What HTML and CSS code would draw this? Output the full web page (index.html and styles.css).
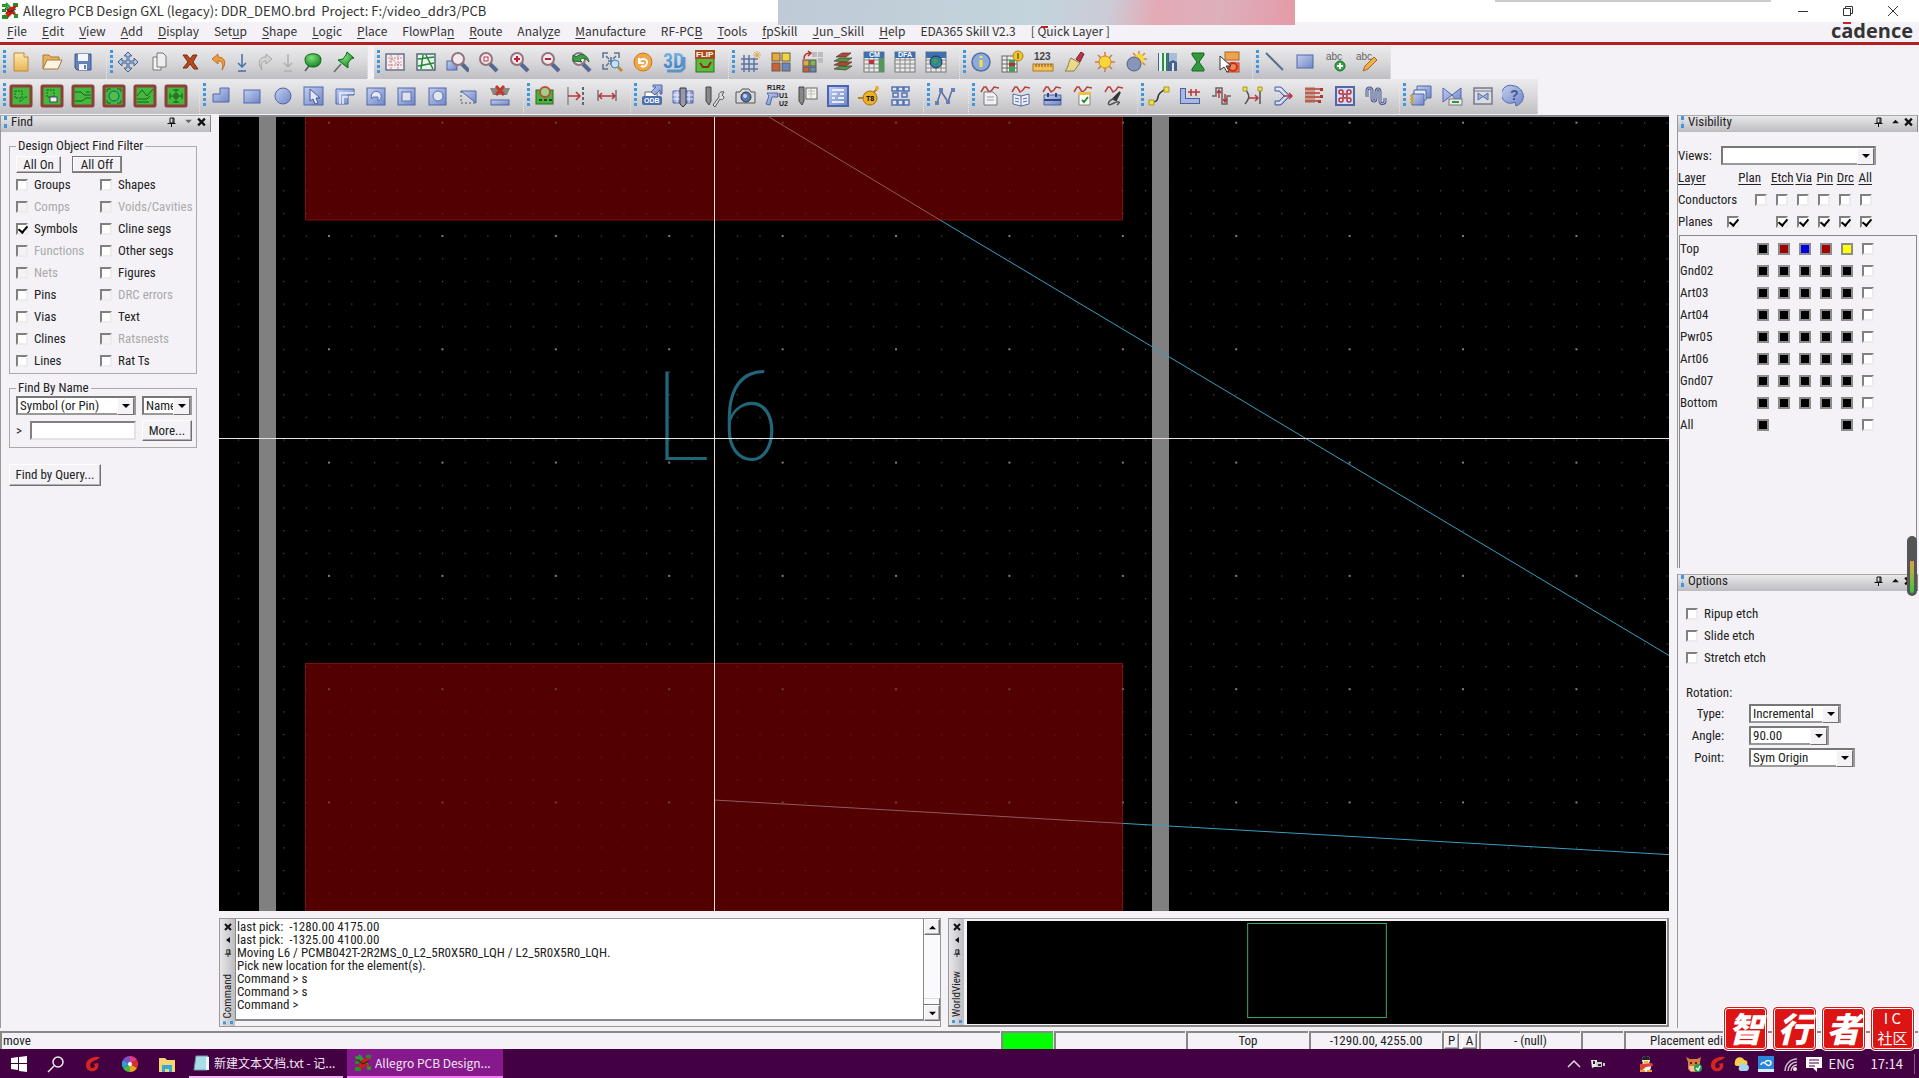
FILE: index.html
```html
<!DOCTYPE html>
<html lang="en">
<head>
<meta charset="utf-8">
<title>Allegro PCB Design GXL (legacy): DDR_DEMO.brd</title>
<link rel="stylesheet" href="styles.css">
</head>
<body>
<svg class="defs" aria-hidden="true">
  <defs>
    <linearGradient id="gb" x1="0" y1="0" x2="1" y2="1"><stop offset="0" stop-color="#c4cff0"/><stop offset="1" stop-color="#6f86c8"/></linearGradient>
    <linearGradient id="gl" x1="0" y1="0" x2="0" y2="1"><stop offset="0" stop-color="#7ec0ef"/><stop offset="1" stop-color="#2f72b8"/></linearGradient>
    <linearGradient id="gy" x1="0" y1="0" x2="0" y2="1"><stop offset="0" stop-color="#ffe9b0"/><stop offset="1" stop-color="#e9b552"/></linearGradient>
    <radialGradient id="gg" cx=".4" cy=".3" r=".8"><stop offset="0" stop-color="#7fe07a"/><stop offset="1" stop-color="#0b7a1c"/></radialGradient>
    <symbol id="allegro" viewBox="0 0 18 18"><path d="M1 2h5v3H1zM1 7h4v3H1zM12 1h5v4h-5zM13 12h4v4h-4zM1 13h6v4H1z" fill="#1f8f2a"/><path d="M2 4c5-2 5 6 8 6s4 4 6 5M5 1l9 10" fill="none" stroke="#2f9f33" stroke-width="2"/><path d="M1 14C6 13 5 6 10 5l7-2-5 6 4 4-5-1-4 4-2-4z" fill="#c5201a"/><path d="M4 6l5 4 6-3" fill="none" stroke="#222" stroke-width="1"/></symbol>
    <symbol id="pin" viewBox="0 0 8 10"><path d="M2.500 1h4v5h-4zM0 6.500h8M4 6.500V10M5.500 1v5" fill="none" stroke="#111"/></symbol>
    <symbol id="swirl" viewBox="0 0 18 18"><path d="M15 2C8 1 2 5 2 10s4 7 8 6 5-5 4-8l-5 1c2 0 3 3 0 4s-4-4-1-6 6-2 8-5z" fill="#d6251e"/></symbol>
    <symbol id="wave" viewBox="0 0 24 24"><path d="M3 8l3-5 2 0 3 5 3-2 2-3 5 1" fill="none" stroke="#b5423f" stroke-width="1.500"/></symbol>
    <symbol id="board" viewBox="0 0 24 24"><rect x="2" y="2" width="20" height="20" rx="1" fill="#43b93d" stroke="#8c4038" stroke-width="3"/></symbol>
    <symbol id="lens" viewBox="0 0 24 24"><path d="M14 14l7 7" stroke="#54698f" stroke-width="4"/><circle cx="10" cy="9" r="6" fill="#f2e9ef" stroke="#95737c" stroke-width="2"/></symbol>
    <symbol id="sheet" viewBox="0 0 24 24"><rect x="2" y="2" width="20" height="20" fill="#e9e9e9" stroke="#777"/><path d="M2 10h20M2 14h20M2 18h20M7 8v14M12 8v14M17 8v14" stroke="#888"/><rect x="2" y="2" width="20" height="6" fill="#3f6fae"/></symbol>
    <symbol id="downarrow" viewBox="0 0 24 24"><path d="M12 4v13M8 13l4 4 4-4M8 21h8" fill="none" stroke="currentColor" stroke-width="1.500"/></symbol>
  </defs>
</svg>

<header class="titlebar">
  <svg class="app-icon" aria-hidden="true"><use href="#allegro"/></svg>
  <h1>Allegro PCB Design GXL (legacy): DDR_DEMO.brd&nbsp; Project: F:/video_ddr3/PCB</h1>
  <div class="window-buttons">
    <button aria-label="Minimize"><svg viewBox="0 0 12 12"><path d="M1 6.500h10"/></svg></button>
    <button aria-label="Restore"><svg viewBox="0 0 12 12"><path d="M1.500 3.500h7v7h-7zM3.500 3.500v-2h7v7h-2"/></svg></button>
    <button aria-label="Close"><svg viewBox="0 0 12 12"><path d="M1 1l10 10M11 1L1 11"/></svg></button>
  </div>
  <div class="screen-blur"></div>
  <div class="record-mark"></div>
  <div class="top-shade"></div>
</header>

<nav class="menubar">
  <button><u>F</u>ile</button><button><u>E</u>dit</button><button><u>V</u>iew</button><button><u>A</u>dd</button><button><u>D</u>isplay</button><button>Set<u>u</u>p</button><button><u>S</u>hape</button><button><u>L</u>ogic</button><button><u>P</u>lace</button><button>FlowPla<u>n</u></button><button><u>R</u>oute</button><button>Analy<u>z</u>e</button><button><u>M</u>anufacture</button><button>RF-PC<u>B</u></button><button><u>T</u>ools</button><button><u>f</u>pSkill</button><button><u>J</u>un_Skill</button><button><u>H</u>elp</button><button>EDA365 Skill V2.3</button><button>[ Quick Layer ]</button>
  <span class="brand">c<span class="brand-a">a</span>dence</span>
</nav>

<div class="toolbars">
<div class="toolrow">
  <div class="tools">
    <button aria-label="New"><svg viewBox="0 0 24 24"><path d="M5 3h10l4 4v14H5z" fill="url(#gy)" stroke="#b98a3c"/><path d="M15 3v4h4" fill="#fff3cf" stroke="#b98a3c"/></svg></button>
    <button aria-label="Open"><svg viewBox="0 0 24 24"><path d="M3 19V5h6l2 2h8v4" fill="#e8b35c" stroke="#a9793a"/><path d="M3 19l4-9h15l-4 9z" fill="#fdf3e2" stroke="#a9793a"/></svg></button>
    <button aria-label="Save"><svg viewBox="0 0 24 24"><path d="M4 4h16v16H6l-2-2z" fill="#6680b8" stroke="#3d568f"/><path d="M7 4h10v7H7zM8 14h8v6H8z" fill="#f3f5fa"/><path d="M13 15h2v4h-2z" fill="#6680b8"/></svg></button>
  </div>
  <div class="tools">
    <button aria-label="Move"><svg viewBox="0 0 24 24"><path d="M12 2l4 4h-3v5h5V8l4 4-4 4v-3h-5v5h3l-4 4-4-4h3v-5H6v3l-4-4 4-4v3h5V6H8z" fill="#b8c9e6" stroke="#3f5f8a"/></svg></button>
    <button aria-label="Copy"><svg viewBox="0 0 24 24"><path d="M6 7h8v13H6z" fill="#f4f4f4" stroke="#777"/><path d="M10 3h6l3 3v11h-9z" fill="#eee" stroke="#777"/></svg></button>
    <button aria-label="Delete"><svg viewBox="0 0 24 24"><path d="M5 5l5 7-5 6h4l3-4 4 5h4l-5-7 4-7h-4l-3 4-3-4z" fill="#b44a1e" stroke="#7a2c10"/></svg></button>
    <button class="wide" aria-label="Undo"><svg viewBox="0 0 24 24"><path d="M5 9l6-5v3c7 0 9 6 4 13 2-6 0-9-4-9v3z" fill="#eb9b3c" stroke="#c0722a"/></svg></button>
    <button class="slim blue" aria-label="Undo list"><svg viewBox="0 0 24 24"><use href="#downarrow"/></svg></button>
    <button class="wide" aria-label="Redo"><svg viewBox="0 0 24 24"><path d="M19 9l-6-5v3c-7 0-9 6-4 13-2-6 0-9 4-9v3z" fill="#d2d2d2" stroke="#a6a6a6"/></svg></button>
    <button class="slim pale" aria-label="Redo list"><svg viewBox="0 0 24 24"><use href="#downarrow"/></svg></button>
    <button aria-label="Pin ball"><svg viewBox="0 0 24 24"><path d="M8 16l-4 5" stroke="#555" stroke-width="1.500"/><path d="M4 9c0-7 16-7 16 0s-5 8-8 8-8-1-8-8z" fill="url(#gg)" stroke="#0b6a18"/></svg></button>
    <button aria-label="Pushpin"><svg viewBox="0 0 24 24"><path d="M9 14l-7 8" stroke="#666" stroke-width="1.500"/><path d="M15 2l7 6-3 1-3 4 0 5-10-8 5-1 3-4z" fill="url(#gg)" stroke="#0c6c1a"/></svg></button>
  </div>
  <div class="tools after-gap">
    <button aria-label="Unrats all"><svg viewBox="0 0 24 24"><rect x="3" y="4" width="18" height="16" fill="#f3eef2" stroke="#6a7288" stroke-width="1.500"/><path d="M5 8h14M5 15h14M8 5v14M15 5v14M6 12l4-3 4 6 5-4" fill="none" stroke="#cf7f86" stroke-dasharray="2 1"/></svg></button>
    <button aria-label="Rats all"><svg viewBox="0 0 24 24"><rect x="3" y="4" width="18" height="16" fill="#e9f3ea" stroke="#53697a" stroke-width="1.500"/><path d="M4 9l16-2M4 16l16-3M9 5l-2 14M12 5l7 14" fill="none" stroke="#25863a" stroke-width="1.500"/></svg></button>
    <button aria-label="Zoom by points"><svg viewBox="0 0 24 24"><rect x="2" y="11" width="10" height="9" class="b"/><use href="#lens" x="3" y="0"/></svg></button>
    <button aria-label="Zoom fit"><svg viewBox="0 0 24 24"><use href="#lens"/><rect x="8" y="7" width="4" height="4" fill="#fff" stroke="#c22f46"/></svg></button>
    <button aria-label="Zoom in"><svg viewBox="0 0 24 24"><use href="#lens"/><path d="M7 9h6M10 6v6" stroke="#c02030" stroke-width="2"/></svg></button>
    <button aria-label="Zoom out"><svg viewBox="0 0 24 24"><use href="#lens"/><path d="M7 9h6" stroke="#c02030" stroke-width="2"/></svg></button>
    <button aria-label="Zoom previous"><svg viewBox="0 0 24 24"><use href="#lens"/><path d="M4 11V5l3 2c5-5 12-2 13 5-4-5-7-4-9-2l2 2z" fill="#3fa04b" stroke="#1c6a2c"/></svg></button>
    <button aria-label="Zoom selection"><svg viewBox="0 0 24 24"><path d="M3 8V3h5M14 3h5v5M3 14v5h5M8 11h7M11 7v8M6 6l3 3M16 6l-3 3M6 16l3-3" fill="none" stroke="#5d7391" stroke-width="1.500"/><circle cx="15" cy="14" r="4" fill="#bfe0fa" stroke="#4d7fae"/><path d="M18 17l4 4" stroke="#c08a3c" stroke-width="3"/></svg></button>
    <button aria-label="Redraw"><svg viewBox="0 0 24 24"><circle cx="12" cy="12" r="9" fill="#f0a74a" stroke="#c9761f"/><path d="M8 8v5h5M8 12c2-5 9-3 8 1s-4 4-6 3" fill="none" stroke="#fff" stroke-width="2"/></svg></button>
    <button aria-label="3D view"><svg viewBox="0 0 24 24"><path d="M5 21h14l3-3V7" fill="none" stroke="#5f93c6" stroke-width="3"/><text x="1" y="18" class="t3d">3D</text></svg></button>
    <button aria-label="Flip design"><svg viewBox="0 0 24 24"><rect x="3" y="8" width="18" height="14" fill="#5cba3c" stroke="#2d6f1d"/><path d="M7 13l3 4h5l3-5" fill="none" stroke="#8c2c18" stroke-width="2"/><rect x="2" y="0" width="20" height="9" fill="#a84a1c"/><text x="3" y="7" class="t8 w">FLIP</text></svg></button>
  </div>
  <div class="tools">
    <button aria-label="Grid toggle"><svg viewBox="0 0 24 24"><path d="M3 9h17M3 14h17M3 19h17M6 5v17M11 5v17M16 8v14" stroke="#5b76a6" stroke-width="1.500"/><path d="M19 1v8M15 5h8M16 2l6 6M22 2l-6 6" stroke="#e2a653"/></svg></button>
    <button aria-label="Color"><svg viewBox="0 0 24 24"><g stroke="#6a5a44"><rect x="3" y="3" width="8" height="8" fill="#e8a93a"/><rect x="13" y="3" width="8" height="8" fill="#f2d63f"/><rect x="3" y="13" width="8" height="8" fill="#c9623a"/><rect x="13" y="13" width="8" height="8" fill="#6787be"/></g></svg></button>
    <button aria-label="Shadow"><svg viewBox="0 0 24 24"><path d="M12 2h5v5h-5zM18 2h5v5h-5zM18 8h5v5h-5z" fill="#bbb"/><path d="M4 9c0-4 2-6 6-6M8 1l3 2-3 3" fill="none" stroke="#b5302e" stroke-width="1.500"/><g stroke="#555"><rect x="3" y="10" width="6" height="6" fill="#e8a93a"/><rect x="10" y="10" width="6" height="6" fill="#7db454"/><rect x="3" y="17" width="6" height="5" fill="#c9623a"/><rect x="10" y="17" width="6" height="5" fill="#6787be"/></g></svg></button>
    <button aria-label="Cross section"><svg viewBox="0 0 24 24"><g stroke="#543" stroke-width=".8"><path d="M3 19l6-3h12l-6 4z" fill="#4a9a48"/><path d="M3 15l6-3h12l-6 4z" fill="#b54434"/><path d="M3 11l6-3h12l-6 4z" fill="#4a9a48"/><path d="M5 7l6-4h9l-5 4z" fill="#b54434"/></g></svg></button>
    <button aria-label="Constraint manager"><svg viewBox="0 0 24 24"><use href="#sheet"/><path d="M7 10h5v4H7z" fill="#b33"/><path d="M17 8h5v14h-5z" fill="#4f9a58"/><text x="7" y="7" class="t7 w">CM</text></svg></button>
    <button aria-label="DFA table"><svg viewBox="0 0 24 24"><use href="#sheet"/><text x="5" y="7" class="t7 w">DFA</text></svg></button>
    <button aria-label="Global table"><svg viewBox="0 0 24 24"><use href="#sheet"/><circle cx="12" cy="12" r="6" fill="#2f7fa6" stroke="#234"/><path d="M8 9l4-1 2 3-4 4zM14 13l3 0-2 4z" fill="#3da158"/></svg></button>
  </div>
  <div class="tools">
    <button aria-label="Show element"><svg viewBox="0 0 24 24"><circle cx="12" cy="12" r="9" fill="#8fabda" stroke="#5570a8" stroke-width="1.500"/><path d="M12 10v7M12 6v2" stroke="#f8e14a" stroke-width="3"/></svg></button>
    <button aria-label="Show information"><svg viewBox="0 0 24 24"><rect x="2" y="6" width="15" height="16" fill="#ececec" stroke="#666"/><path d="M2 10h15M2 14h15M2 18h15M7 6v16" stroke="#666"/><path d="M9 10h6v12H9z" fill="#4f9a58"/><path d="M9 13h6v3H9z" fill="#a33"/><circle cx="18" cy="6" r="5" fill="#f1c524" stroke="#a8851c"/><path d="M18 3v6" stroke="#333"/></svg></button>
    <button aria-label="Measure"><svg viewBox="0 0 24 24"><text x="3" y="10" class="t10">123</text><rect x="2" y="14" width="20" height="7" fill="#f4c25b" stroke="#b07b22"/><path d="M5 14v3M8 14v3M11 14v3M14 14v3M17 14v3M20 14v3" stroke="#7c5516"/></svg></button>
    <button aria-label="Highlight"><svg viewBox="0 0 24 24"><path d="M14 9l5-7 3 2-4 8z" fill="#b5364a" stroke="#7c2232"/><path d="M9 8l9 5-6 8H3c4-4 3-9 6-13z" fill="#ead98c" stroke="#8c7a44"/></svg></button>
    <button aria-label="Brighten"><svg viewBox="0 0 24 24"><path d="M12 2v20M2 12h20M5 5l14 14M19 5L5 19" stroke="#cf7f3a" stroke-width="1.500"/><circle cx="12" cy="12" r="6" fill="#fbd63a" stroke="#c98e1c"/></svg></button>
    <button aria-label="Dim"><svg viewBox="0 0 24 24"><path d="M15 1v16M7 9h16M9 3l12 12M21 3L9 15" stroke="#cf8f3a" stroke-width="1.500"/><circle cx="15" cy="9" r="5" fill="#fbd63a"/><circle cx="10" cy="14" r="7" fill="#8795b8" stroke="#4f5f88"/></svg></button>
    <button aria-label="Waive DRC"><svg viewBox="0 0 24 24"><path d="M3 3h19v18H3z" fill="#44648c"/><path d="M4 3h3v18H4zM9 3h2v18H9z" fill="#e8f3e8"/><path d="M7 3h2v18H7zM12 3h1v18h-1z" fill="#2f8f53"/><path d="M14 3h8v9l-4-2-4 2z" fill="#a9bfd8"/><path d="M17 13h2v8h-2z" fill="#dfe8f2"/></svg></button>
    <button aria-label="Run task"><svg viewBox="0 0 24 24"><path d="M6 3h12v2l-5 7 5 7v2H6v-2l5-7-5-7z" fill="#2f9a3c" stroke="#14641f"/></svg></button>
    <button aria-label="Deselect"><svg viewBox="0 0 24 24"><rect x="8" y="2" width="14" height="8" fill="#eea24e" stroke="#a8682a"/><rect x="10" y="13" width="12" height="9" fill="#e88b4e" stroke="#b3442a"/><circle cx="16" cy="17" r="4" fill="none" stroke="#d8281e" stroke-width="2"/><path d="M3 6v14l4-3 3 5 2-1-3-5h5z" fill="#fff" stroke="#333"/></svg></button>
  </div>
  <div class="tools">
    <button aria-label="Add line"><svg viewBox="0 0 24 24"><path d="M4 3l17 17" stroke="#5d6c90" stroke-width="2"/></svg></button>
    <button aria-label="Add rectangle"><svg viewBox="0 0 24 24"><rect x="4" y="5" width="16" height="13" class="b"/></svg></button>
    <button aria-label="Add text"><svg viewBox="0 0 24 24"><text x="2" y="10" class="abc">abc</text><circle cx="16" cy="16" r="5" fill="#35a344" stroke="#187026"/><path d="M16 13v6M13 16h6" stroke="#fff" stroke-width="2"/></svg></button>
    <button aria-label="Edit text"><svg viewBox="0 0 24 24"><text x="1" y="10" class="abc">abc</text><path d="M8 21l2-5 9-9 3 3-9 9z" fill="#eeb146" stroke="#a8652a"/></svg></button>
  </div>
</div>

<div class="toolrow">
  <div class="tools">
    <button aria-label="General edit"><svg viewBox="0 0 24 24"><use href="#board"/><path d="M6 7h7v7H6z" class="gd"/><path d="M10 17c5 0 3-4 8-4" class="gk"/></svg></button>
    <button aria-label="Placement edit"><svg viewBox="0 0 24 24"><use href="#board"/><path d="M7 6h7v7H7z" class="gd"/><rect x="10" y="13" width="7" height="5" fill="#eef" stroke="#445"/></svg></button>
    <button aria-label="Etch edit"><svg viewBox="0 0 24 24"><use href="#board"/><path d="M4 8h6l3 3h7M4 17h7l4-3h5M15 8h4" class="gk"/></svg></button>
    <button aria-label="Shape edit"><svg viewBox="0 0 24 24"><use href="#board"/><circle cx="12" cy="12" r="5" fill="#4cc144" stroke="#16569a"/><path d="M5 8V5h4M15 5h4v3M5 16v3h4M19 16v3h-4" class="gk"/></svg></button>
    <button aria-label="Signal edit"><svg viewBox="0 0 24 24"><use href="#board"/><path d="M4 12l5-6 5 6 6-7M4 15h10l3-3M4 18h12" class="gk"/></svg></button>
    <button aria-label="RF edit"><svg viewBox="0 0 24 24"><use href="#board"/><path d="M12 5v14M5 12h14M9 6h6M9 18h6M6 9v6M18 9v6M10 10h4v4h-4z" class="gk"/></svg></button>
  </div>
  <div class="tools">
    <button aria-label="Add polygon"><svg viewBox="0 0 24 24"><path d="M11 4h9v14H4v-8h7z" class="b"/></svg></button>
    <button aria-label="Add shape rectangle"><svg viewBox="0 0 24 24"><rect x="4" y="6" width="16" height="13" class="b"/></svg></button>
    <button aria-label="Add circle"><svg viewBox="0 0 24 24"><circle cx="12" cy="12" r="8" class="b"/></svg></button>
    <button aria-label="Select shape"><svg viewBox="0 0 24 24"><rect x="2" y="3" width="19" height="18" class="b"/><path d="M8 5v12l3-2 2 5 3-1-2-5h4z" fill="#dfe6f8" stroke="#4a5c90"/></svg></button>
    <button aria-label="Manual void polygon"><svg viewBox="0 0 24 24"><path d="M3 5h18v6h-6v9H3z" class="b"/><path d="M7 20V9h14M10 20v-7h5" class="w1"/></svg></button>
    <button aria-label="Edit boundary"><svg viewBox="0 0 24 24"><rect x="3" y="4" width="18" height="17" class="b"/><path d="M8 15a5 5 0 1 1 6 2v-4H9z" fill="#e3e9f8" stroke="#5a70ae"/></svg></button>
    <button aria-label="Void rectangle"><svg viewBox="0 0 24 24"><rect x="3" y="4" width="17" height="17" class="b"/><rect x="7" y="8" width="9" height="9" fill="#dfe0ea" stroke="#5a70ae"/></svg></button>
    <button aria-label="Void circle"><svg viewBox="0 0 24 24"><rect x="3" y="4" width="17" height="17" class="b"/><circle cx="12" cy="12" r="5" fill="#e3e5ef" stroke="#5a70ae"/></svg></button>
    <button aria-label="Cut shape"><svg viewBox="0 0 24 24"><path d="M4 7h15v12z" class="b"/><path d="M4 7v12h15" fill="none" stroke="#555" stroke-dasharray="2 2"/></svg></button>
    <button aria-label="Delete islands"><svg viewBox="0 0 24 24"><path d="M2 4h20l-3 7H5z" fill="#888"/><path d="M8 2l8 9M16 2L8 11" stroke="#c2392a" stroke-width="3"/><rect x="3" y="16" width="18" height="5" class="b"/></svg></button>
  </div>
  <div class="tools">
    <button aria-label="Snap to pad"><svg viewBox="0 0 24 24"><rect x="3" y="6" width="17" height="14" fill="#4fae42" stroke="#2b6b22"/><path d="M6 16h3M11 16h3M16 16h3" stroke="#14501a" stroke-width="2"/><circle cx="12" cy="8" r="5" fill="#9fcf88" stroke="#bb5238" stroke-width="2"/></svg></button>
    <button aria-label="Spacing"><svg viewBox="0 0 24 24"><path d="M4 3v18" stroke="#666"/><path d="M19 3v18" stroke="#666" stroke-width="2" stroke-dasharray="3 2"/><path d="M4 12h11M12 8l4 4-4 4" class="r"/></svg></button>
    <button aria-label="Dimension"><svg viewBox="0 0 24 24"><path d="M3 6v11M21 6v11" stroke="#777" stroke-width="1.500"/><path d="M4 12h16M7 9l-3 3 3 3M17 9l3 3-3 3" class="r"/></svg></button>
  </div>
  <div class="tools">
    <button aria-label="ODB export"><svg viewBox="0 0 24 24"><path d="M5 8h12v5H5z" fill="#fff" stroke="#667"/><path d="M11 8l5-5h-3V1h9v9h-2V6l-5 5z" class="b"/><rect x="2" y="12" width="20" height="9" rx="2" fill="#4d6fae"/><text x="4" y="19" class="t7 w">ODB</text></svg></button>
    <button aria-label="Artwork"><svg viewBox="0 0 24 24"><path d="M2 7h20v12H2z" class="b"/><path d="M2 11h20M2 15h20M6 7v12M18 7v12" stroke="#eef"/><path d="M9 4h6v16l-3 3-3-3z" fill="#99a" stroke="#334"/></svg></button>
    <button aria-label="NC parameters"><svg viewBox="0 0 24 24"><path d="M4 3h5v14l-2 4-3-4z" fill="#888" stroke="#444"/><path d="M11 21l6-8c-1-4 2-6 5-5l-2 3 2 2c0 3-3 3-4 2l-5 8z" fill="#ddd" stroke="#555"/></svg></button>
    <button aria-label="Snapshot"><svg viewBox="0 0 24 24"><path d="M3 8h4l2-3h7l2 3h4v11H3z" fill="#d8d8dc" stroke="#555"/><circle cx="13" cy="13" r="5" fill="#5577b4" stroke="#333"/><circle cx="12" cy="12" r="2" fill="#c6d6f2"/></svg></button>
    <button aria-label="Rename reference"><svg viewBox="0 0 24 24"><text x="3" y="6" class="t6">R1R2</text><text x="15" y="14" class="t6">U1</text><text x="15" y="22" class="t6">U2</text><path d="M3 9h11v4H8l-2 8-4-1 3-8z" class="b"/></svg></button>
    <button aria-label="Drill legend"><svg viewBox="0 0 24 24"><path d="M4 3h5v14l-2 4-3-4z" fill="#888" stroke="#444"/><rect x="11" y="4" width="11" height="11" fill="#f3f3ee" stroke="#666"/><path d="M13 7h7M13 10h7M16 5v9" stroke="#bbb"/></svg></button>
    <button aria-label="Silkscreen"><svg viewBox="0 0 24 24"><rect x="2" y="2" width="20" height="20" class="b"/><path d="M6 6h12M6 10h5M14 10h4M6 14h3M12 14h6M6 18h12" stroke="#e6ecfa" stroke-width="2"/><rect x="2" y="2" width="20" height="20" fill="none" stroke="#4a66b0" stroke-width="2"/></svg></button>
    <button aria-label="Testprep"><svg viewBox="0 0 24 24"><path d="M1 14h6M15 10l5-5v-3" fill="none" stroke="#b88418" stroke-width="2"/><circle cx="13" cy="14" r="7" fill="#eab028" stroke="#a57212"/><circle cx="20" cy="4" r="2" fill="#eab028"/><text x="9" y="17" class="t7">T8</text></svg></button>
    <button aria-label="Bump array"><svg viewBox="0 0 24 24"><g fill="#dbe4f6" stroke="#5673ae" stroke-width="1.500"><path d="M4 3h5v4H4zM10 3h5v4h-5zM16 3h5v4h-5zM5 9h5v4H5zM14 9h5v4h-5zM4 16h5v5H4zM10 16h5v5h-5zM16 16h5v5h-5z"/></g></svg></button>
  </div>
  <div class="tools">
    <button aria-label="Net schedule"><svg viewBox="0 0 24 24"><path d="M4 19l4-12 7 11 4-12" fill="none" stroke="#5b6c9c" stroke-width="1.500"/><path d="M2 17h4v4H2zM6 4h4v4H6zM13 16h4v4h-4zM18 4h4v4h-4z" fill="#6b7fb5"/></svg></button>
  </div>
  <div class="tools">
    <button aria-label="Signal model"><svg viewBox="0 0 24 24"><use href="#wave"/><path d="M6 8h9l4 4v9H6z" fill="#f2f2f2" stroke="#777"/><path d="M9 13h7M9 16h7" stroke="#999"/></svg></button>
    <button aria-label="Signal library"><svg viewBox="0 0 24 24"><use href="#wave"/><path d="M4 10l8 2 8-2v10l-8 2-8-2z" fill="#eef2fb" stroke="#56699a"/><path d="M12 12v10M6 14l4 1M14 15l4-1M6 17l4 1M14 18l4-1" stroke="#56699a"/></svg></button>
    <button aria-label="Signal audit"><svg viewBox="0 0 24 24"><use href="#wave"/><path d="M4 11h17v10H4z" class="b"/><path d="M4 16h17M8 9v4M16 9v4" stroke="#2f4578" stroke-width="2"/></svg></button>
    <button aria-label="Signal setup"><svg viewBox="0 0 24 24"><use href="#wave"/><path d="M8 10h11v11H8z" fill="#fdfdf6" stroke="#888"/><path d="M7 8h13v3H7z" fill="#e7c447"/><path d="M11 16l2 2 4-5" fill="none" stroke="#238a30" stroke-width="2"/></svg></button>
    <button aria-label="Signal probe"><svg viewBox="0 0 24 24"><use href="#wave"/><path d="M18 8l-7 7 3 1z" fill="#333" stroke="#333" stroke-width="2"/><path d="M12 15c-6 1-8 8-2 5s10-3 5 1" fill="none" stroke="#555" stroke-width="1.500"/></svg></button>
  </div>
  <div class="tools">
    <button aria-label="Add connect"><svg viewBox="0 0 24 24"><path d="M5 18c8 0 4-5 8-9l5-4" fill="none" stroke="#333" stroke-width="1.500"/><path d="M2 16h5v5H2zM17 3h5v5h-5z" fill="#f1df4a" stroke="#a8982c"/></svg></button>
    <button aria-label="Slide"><svg viewBox="0 0 24 24"><path d="M5 4v13h17" fill="none" stroke="#4c62a0" stroke-width="6"/><path d="M5 5v12h16" fill="none" stroke="#a9b8e2" stroke-width="4"/><path d="M10 8h12M13 5v7M18 5v7" class="r"/></svg></button>
    <button aria-label="Delay tune"><svg viewBox="0 0 24 24"><path d="M3 12h4V4h6v16h5v-8h4" fill="none" stroke="#666" stroke-width="1.500"/><path d="M10 14V7M8 9l2-3 2 3M16 10v7M14 15l2 3 2-3" class="r"/></svg></button>
    <button aria-label="Custom smooth"><svg viewBox="0 0 24 24"><path d="M5 5c5 6 5 9 0 15M20 5v15" fill="none" stroke="#555" stroke-width="1.500"/><path d="M9 14h9M15 11l3 3-3 3" class="r"/><path d="M3 3h4v4H3zM18 3h4v4h-4z" fill="#f1df4a" stroke="#a8982c"/></svg></button>
    <button aria-label="Gloss"><svg viewBox="0 0 24 24"><path d="M4 3h6l9 9-9 9H4v-4h4l5-5-5-5H4z" class="b"/><path d="M5 5h4l7 7-7 7H5" class="w1"/><path d="M12 12h9M18 9l3 3-3 3" class="r"/></svg></button>
    <button aria-label="Fanout"><svg viewBox="0 0 24 24"><path d="M3 5h10M3 9h10M3 13h10M3 17h10" stroke="#b5614e" stroke-width="3"/><path d="M13 5h7M13 9h5M13 13h7M13 17h5" class="r"/><path d="M18 4h3v3h-3zM18 11h3v3h-3zM16 16h3v3h-3z" fill="#a93a2c"/></svg></button>
    <button aria-label="Via array"><svg viewBox="0 0 24 24"><rect x="3" y="3" width="18" height="18" fill="#d3dcf3" stroke="#5068a8" stroke-width="2"/><g fill="#f4e4ea" stroke="#b33440" stroke-width="1.500"><circle cx="8" cy="8" r="2"/><circle cx="16" cy="8" r="2"/><circle cx="8" cy="16" r="2"/><circle cx="16" cy="16" r="2"/><circle cx="12" cy="12" r="2"/></g></svg></button>
    <button aria-label="Auto interactive"><svg viewBox="0 0 24 24"><path d="M3 13V7c0-4 5-4 5 0v7c0 4 4 4 4 0V8c0-4 4-4 4 0v9c0 4 5 3 5 0v-3" fill="none" stroke="#4c5c88" stroke-width="3"/><path d="M3 13V7c0-4 5-4 5 0v7c0 4 4 4 4 0V8c0-4 4-4 4 0v9c0 4 5 3 5 0v-3" fill="none" stroke="#c9d2ea"/></svg></button>
  </div>
  <div class="tools">
    <button aria-label="Dock windows"><svg viewBox="0 0 24 24"><path d="M8 2h14v12H8z" class="b"/><path d="M5 6h12v10H5z" fill="#e5ebf8" stroke="#4c62a0"/><path d="M3 10h12v11H3z" class="b"/><path d="M1 12h4M1 15h4M1 18h4" stroke="#d8a93a" stroke-width="2"/></svg></button>
    <button aria-label="Reports"><svg viewBox="0 0 24 24"><path d="M3 4l9 7-9 7zM21 4l-9 7 4 5h5z" class="b"/><rect x="9" y="15" width="13" height="6" fill="#eee" stroke="#777"/><path d="M12 18h7" stroke="#2a9a44" stroke-width="2"/></svg></button>
    <button aria-label="Schematic view"><svg viewBox="0 0 24 24"><rect x="3" y="4" width="18" height="16" fill="#dcdde3" stroke="#77798a" stroke-width="1.500"/><path d="M3 7h18" stroke="#77798a"/><path d="M7 9l10 7V9L7 16z" fill="#9fb2dc" stroke="#5570a8"/></svg></button>
    <button aria-label="Help"><svg viewBox="0 0 24 24"><path d="M12 2a9 9 0 1 0 1 16l1 4c7-3 8-8 7-12s-5-8-9-8z" class="b"/><text x="8" y="16" class="thelp">?</text></svg></button>
  </div>
</div>
</div>

<main class="workspace">
  <aside class="panel">
    <h2 class="panel-title"><span>Find</span><svg class="ti" aria-hidden="true"><use href="#pin"/></svg><svg class="ti" viewBox="0 0 8 8" aria-hidden="true"><path d="M1 2h6L4 5z" fill="#666"/></svg><svg class="ti" viewBox="0 0 8 8" aria-hidden="true"><path d="M1 1l6 6M7 1L1 7" stroke="#111" stroke-width="2"/></svg></h2>
    <div class="find-body">
      <fieldset class="group filter">
        <legend>Design Object Find Filter</legend>
        <div class="filter-buttons"><button class="btn">All On</button><button class="btn on">All Off</button></div>
        <div class="checks">
          <label><input type="checkbox">Groups</label><label><input type="checkbox">Shapes</label>
          <label class="off"><input type="checkbox" disabled>Comps</label><label class="off"><input type="checkbox" disabled>Voids/Cavities</label>
          <label><input type="checkbox" checked>Symbols</label><label><input type="checkbox">Cline segs</label>
          <label class="off"><input type="checkbox" disabled>Functions</label><label><input type="checkbox">Other segs</label>
          <label class="off"><input type="checkbox" disabled>Nets</label><label><input type="checkbox">Figures</label>
          <label><input type="checkbox">Pins</label><label class="off"><input type="checkbox" disabled>DRC errors</label>
          <label><input type="checkbox">Vias</label><label><input type="checkbox">Text</label>
          <label><input type="checkbox">Clines</label><label class="off"><input type="checkbox" disabled>Ratsnests</label>
          <label><input type="checkbox">Lines</label><label><input type="checkbox">Rat Ts</label>
        </div>
      </fieldset>
      <fieldset class="group by-name">
        <legend>Find By Name</legend>
        <div class="name-grid">
          <span class="combo"><select aria-label="Object type"><option>Symbol (or Pin)</option></select></span>
          <span class="combo"><select aria-label="Match by"><option>Name</option></select></span>
          <label class="prompt">&gt;<input type="text" aria-label="Name"></label>
          <button class="btn more">More...</button>
        </div>
      </fieldset>
      <button class="btn query">Find by Query...</button>
    </div>
  </aside>

  <section class="center">
    <div class="canvas">
      <svg viewBox="219 117 1450 794" preserveAspectRatio="xMidYMid slice" role="img" aria-label="Board layout">
        <defs>
          <pattern id="minor" x="317.700" y="111.400" width="22.680" height="22.660" patternUnits="userSpaceOnUse"><rect x="11" y="11" width="1" height="1" fill="#787878"/></pattern>
          <pattern id="major" x="272.300" y="66" width="113.400" height="113.300" patternUnits="userSpaceOnUse"><circle cx="56.700" cy="56.700" r="1" fill="#999"/></pattern>
        </defs>
        <rect x="219" y="117" width="1450" height="794" fill="#000"/>
        <path d="M259 117h17v794h-17zM1152 117h17v794h-17z" fill="#808080"/>
        <rect x="219" y="117" width="1450" height="794" fill="url(#minor)"/>
        <rect x="219" y="117" width="1450" height="794" fill="url(#major)"/>
        <path d="M305.500 100h817v120h-817zM305.500 663.500h817v260h-817z" fill="#520000" stroke="#7c1010"/>
        <g opacity=".5"><path d="M305 100h818v120h-818zM305 663h818v260h-818z" fill="url(#minor)"/><path d="M305 100h818v120h-818zM305 663h818v260h-818z" fill="url(#major)"/></g>
        <path d="M769 117l171 103M714 800l409 23.400" stroke="#8c5a62" fill="none"/>
        <path d="M940 220l729 435.500M1123 823.400l546 31.200" stroke="#3b9dc0" fill="none"/>
        <text x="654 720" y="460" class="refdes">L6</text>
        <path d="M714.500 117v794M219 438.500h1450" stroke="#e8e0e0"/>
      </svg>
    </div>
    <div class="bottom">
      <section class="command">
        <div class="side-title"><svg viewBox="0 0 8 8" aria-hidden="true"><path d="M1 1l6 6M7 1L1 7" stroke="#111" stroke-width="2"/></svg><svg viewBox="0 0 8 8" aria-hidden="true"><path d="M6 1v6L2 4z" fill="#111"/></svg><svg aria-hidden="true"><use href="#pin"/></svg><h2>Command</h2></div>
        <div class="log" tabindex="0"><p>last pick:&nbsp; -1280.00 4175.00</p><p>last pick:&nbsp; -1325.00 4100.00</p><p>Moving L6 / PCMB042T-2R2MS_0_L2_5R0X5R0_LQH / L2_5R0X5R0_LQH.</p><p>Pick new location for the element(s).</p><p>Command &gt; s</p><p>Command &gt; s</p><p>Command &gt;</p></div>
        <div class="scroll"><button class="btn" aria-label="Scroll up"><svg viewBox="0 0 8 8"><path d="M0 6h8L4 2z"/></svg></button><span class="thumb"></span><button class="btn" aria-label="Scroll down"><svg viewBox="0 0 8 8"><path d="M0 2h8L4 6z"/></svg></button></div>
      </section>
      <section class="world">
        <div class="side-title"><svg viewBox="0 0 8 8" aria-hidden="true"><path d="M1 1l6 6M7 1L1 7" stroke="#111" stroke-width="2"/></svg><svg viewBox="0 0 8 8" aria-hidden="true"><path d="M6 1v6L2 4z" fill="#111"/></svg><svg aria-hidden="true"><use href="#pin"/></svg><h2>WorldView</h2></div>
        <div class="map"><svg viewBox="0 0 702 104" role="img" aria-label="World view"><rect x="281.500" y="2.500" width="140" height="95" fill="none" stroke="#42ac66"/></svg></div>
      </section>
    </div>
  </section>

  <aside class="right">
    <section class="panel">
      <h2 class="panel-title"><span>Visibility</span><svg class="ti" aria-hidden="true"><use href="#pin"/></svg><svg class="ti" viewBox="0 0 8 8" aria-hidden="true"><path d="M1 5h6L4 2z" fill="#111"/></svg><svg class="ti" viewBox="0 0 8 8" aria-hidden="true"><path d="M1 1l6 6M7 1L1 7" stroke="#111" stroke-width="2"/></svg></h2>
      <div class="views"><label for="views">Views:</label><span class="combo"><select id="views"><option></option></select></span></div>
      <table class="layers">
        <colgroup><col class="c-name"><col class="c-gap"><col><col><col><col><col><col></colgroup>
        <tr><th scope="col">Layer</th><th scope="col" colspan="2" class="plan">Plan</th><th scope="col">Etch</th><th scope="col">Via</th><th scope="col">Pin</th><th scope="col">Drc</th><th scope="col">All</th></tr>
        <tr><td colspan="2">Conductors</td><td><input type="checkbox" aria-label="Conductors plan"></td><td><input type="checkbox" aria-label="Conductors etch"></td><td><input type="checkbox" aria-label="Conductors via"></td><td><input type="checkbox" aria-label="Conductors pin"></td><td><input type="checkbox" aria-label="Conductors drc"></td><td><input type="checkbox" aria-label="Conductors all"></td></tr>
        <tr><td>Planes</td><td><input type="checkbox" checked aria-label="Planes plan"></td><td></td><td><input type="checkbox" checked aria-label="Planes etch"></td><td><input type="checkbox" checked aria-label="Planes via"></td><td><input type="checkbox" checked aria-label="Planes pin"></td><td><input type="checkbox" checked aria-label="Planes drc"></td><td><input type="checkbox" checked aria-label="Planes all"></td></tr>
      </table>
      <div class="layer-list">
      <table class="layers">
        <colgroup><col class="c-name"><col class="c-gap"><col><col><col><col><col><col></colgroup>
        <tr><td colspan="2">Top</td><td><button class="sw" aria-label="Plan"></button></td><td><button class="sw red" aria-label="Etch"></button></td><td><button class="sw blue" aria-label="Via"></button></td><td><button class="sw red" aria-label="Pin"></button></td><td><button class="sw yellow" aria-label="Drc"></button></td><td><input type="checkbox" aria-label="Top all"></td></tr>
        <tr><td colspan="2">Gnd02</td><td><button class="sw" aria-label="Plan"></button></td><td><button class="sw" aria-label="Etch"></button></td><td><button class="sw" aria-label="Via"></button></td><td><button class="sw" aria-label="Pin"></button></td><td><button class="sw" aria-label="Drc"></button></td><td><input type="checkbox" aria-label="Gnd02 all"></td></tr>
        <tr><td colspan="2">Art03</td><td><button class="sw" aria-label="Plan"></button></td><td><button class="sw" aria-label="Etch"></button></td><td><button class="sw" aria-label="Via"></button></td><td><button class="sw" aria-label="Pin"></button></td><td><button class="sw" aria-label="Drc"></button></td><td><input type="checkbox" aria-label="Art03 all"></td></tr>
        <tr><td colspan="2">Art04</td><td><button class="sw" aria-label="Plan"></button></td><td><button class="sw" aria-label="Etch"></button></td><td><button class="sw" aria-label="Via"></button></td><td><button class="sw" aria-label="Pin"></button></td><td><button class="sw" aria-label="Drc"></button></td><td><input type="checkbox" aria-label="Art04 all"></td></tr>
        <tr><td colspan="2">Pwr05</td><td><button class="sw" aria-label="Plan"></button></td><td><button class="sw" aria-label="Etch"></button></td><td><button class="sw" aria-label="Via"></button></td><td><button class="sw" aria-label="Pin"></button></td><td><button class="sw" aria-label="Drc"></button></td><td><input type="checkbox" aria-label="Pwr05 all"></td></tr>
        <tr><td colspan="2">Art06</td><td><button class="sw" aria-label="Plan"></button></td><td><button class="sw" aria-label="Etch"></button></td><td><button class="sw" aria-label="Via"></button></td><td><button class="sw" aria-label="Pin"></button></td><td><button class="sw" aria-label="Drc"></button></td><td><input type="checkbox" aria-label="Art06 all"></td></tr>
        <tr><td colspan="2">Gnd07</td><td><button class="sw" aria-label="Plan"></button></td><td><button class="sw" aria-label="Etch"></button></td><td><button class="sw" aria-label="Via"></button></td><td><button class="sw" aria-label="Pin"></button></td><td><button class="sw" aria-label="Drc"></button></td><td><input type="checkbox" aria-label="Gnd07 all"></td></tr>
        <tr><td colspan="2">Bottom</td><td><button class="sw" aria-label="Plan"></button></td><td><button class="sw" aria-label="Etch"></button></td><td><button class="sw" aria-label="Via"></button></td><td><button class="sw" aria-label="Pin"></button></td><td><button class="sw" aria-label="Drc"></button></td><td><input type="checkbox" aria-label="Bottom all"></td></tr>
        <tr><td colspan="2">All</td><td><button class="sw" aria-label="Plan"></button></td><td></td><td></td><td></td><td><button class="sw" aria-label="Drc"></button></td><td><input type="checkbox" aria-label="All layers"></td></tr>
      </table>
      </div>
    </section>
    <section class="panel options">
      <h2 class="panel-title"><span>Options</span><svg class="ti" aria-hidden="true"><use href="#pin"/></svg><svg class="ti" viewBox="0 0 8 8" aria-hidden="true"><path d="M1 5h6L4 2z" fill="#111"/></svg><svg class="ti" viewBox="0 0 8 8" aria-hidden="true"><path d="M1 1l6 6M7 1L1 7" stroke="#111" stroke-width="2"/></svg></h2>
      <div class="meter"></div>
      <div class="options-body">
        <label><input type="checkbox">Ripup etch</label>
        <label><input type="checkbox">Slide etch</label>
        <label><input type="checkbox">Stretch etch</label>
        <h3>Rotation:</h3>
        <div class="fields">
          <label for="rt">Type:</label><span class="combo w-type"><select id="rt"><option>Incremental</option></select></span>
          <label for="ra">Angle:</label><span class="combo w-angle"><select id="ra"><option>90.00</option></select></span>
          <label for="rp">Point:</label><span class="combo w-point"><select id="rp"><option>Sym Origin</option></select></span>
        </div>
      </div>
    </section>
  </aside>
</main>

<footer class="status">
  <span class="s-msg">move</span><span class="s-led"></span><span class="s-free"></span><span class="s-layer">Top</span><span class="s-xy">-1290.00, 4255.00</span><span class="s-pa"><button class="btn">P</button><button class="btn">A</button></span><span class="s-null">- (null)</span><span class="s-blank"></span><span class="s-mode">Placement edit</span>
</footer>

<div class="taskbar">
  <button class="tk" aria-label="Start"><svg viewBox="0 0 18 18"><path d="M1 3l7-1v6H1zM9 2l8-1v7H9zM1 9h7v6l-7-1zM9 9h8v8l-8-1z" fill="#fff"/></svg></button>
  <button class="tk" aria-label="Search"><svg viewBox="0 0 18 18"><circle cx="11" cy="7" r="5" fill="none" stroke="#eee" stroke-width="1.500"/><path d="M7 11l-6 6" stroke="#eee" stroke-width="1.500"/></svg></button>
  <button class="tk" aria-label="G browser"><svg><use href="#swirl"/></svg></button>
  <button class="tk" aria-label="Color wheel"><svg viewBox="0 0 18 18"><path d="M9 9V1a8 8 0 0 1 7 4z" fill="#e03a7a"/><path d="M9 9l7-4a8 8 0 0 1 0 8z" fill="#d83030"/><path d="M9 9l7 4a8 8 0 0 1-7 4z" fill="#f0a020"/><path d="M9 9v8a8 8 0 0 1-7-4z" fill="#49b84a"/><path d="M9 9l-7 4a8 8 0 0 1 0-8z" fill="#2fa0d0"/><path d="M9 9L2 5a8 8 0 0 1 7-4z" fill="#7b4fd0"/><circle cx="9" cy="9" r="2" fill="#fff"/></svg></button>
  <button class="tk" aria-label="Files"><svg viewBox="0 0 18 18"><path d="M1 3h6l2 2h8v12H1z" fill="#f6d572"/><path d="M4 10h10v7h-3v-3H7v3H4z" fill="#35a9d8"/></svg></button>
  <button class="task"><svg viewBox="0 0 18 18" aria-hidden="true"><path d="M3 2h12l-1 14H1z" fill="#a9dbe8" stroke="#6b9aa8"/><path d="M13 3h3v13h-3z" fill="#eaf6fa"/></svg><span>新建文本文档.txt - 记...</span></button>
  <button class="task active"><svg aria-hidden="true"><use href="#allegro"/></svg><span>Allegro PCB Design...</span></button>
  <div class="tray">
    <svg viewBox="0 0 18 18"><path d="M3 12l6-6 6 6" fill="none" stroke="#e6d6e6" stroke-width="1.500"/></svg>
    <svg viewBox="0 0 18 18"><path d="M2 5h6v7H5l-2 1z" fill="#e8e8e8"/><path d="M7 7h6v5H7zM14 8h2v3h-2z" fill="#ccc"/><path d="M4 6h2v3H4zM9 9h3v2H9z" fill="#222"/></svg>
    <svg class="far" viewBox="0 0 18 18"><circle cx="9" cy="5" r="4" fill="#e8e8e8"/><path d="M5 5a4 4 0 0 1 8 0z" fill="#222"/><circle cx="9" cy="12" r="5" fill="#f4f4f4"/><path d="M3 9l12-1 1 3-7 1-6 5z" fill="#dc4630"/><path d="M3 15h5v2H3zM10 15h5v2h-5z" fill="#eaa02c"/><path d="M7 6h4v2H7z" fill="#f3b52c"/></svg>
    <svg class="far" viewBox="0 0 18 18"><path d="M1 2l4 2h7l4-2-1 5v7l-5 3H6l-3-3V7z" fill="#d87c44"/><path d="M4 11h8v5H5z" fill="#f0c898"/><path d="M5 7h2v2H5zM10 7h2v2h-2z" fill="#522"/><circle cx="13" cy="13" r="4" fill="#22a04a"/><path d="M11 13l2 2 2-4" fill="none" stroke="#fff" stroke-width="1.500"/></svg>
    <svg><use href="#swirl"/></svg>
    <svg viewBox="0 0 18 18"><path d="M2 7c0-6 8-6 9-2 5 0 4 6 1 6H4C2 11 1 9 2 7z" fill="#f6cd4c"/><path d="M6 12c0-4 5-5 6-2 4-3 6 6 1 6H8c-2 0-3-2-2-4z" fill="#a4d4f4"/></svg>
    <svg viewBox="0 0 18 18"><path d="M1 1h16v16H1z" fill="#2a86d8"/><path d="M4 10c0-3 3-3 5-1s5 2 5-1-4-3-6-1" fill="none" stroke="#fff" stroke-width="1.500"/><path d="M1 14h16v3H1z" fill="#d8ecfa"/></svg>
    <svg viewBox="0 0 18 18"><path d="M4 16A12 12 0 0 1 16 4M7 16a9 9 0 0 1 9-9M10 16a6 6 0 0 1 6-6" fill="none" stroke="#cbbccb" stroke-width="1.500"/><circle cx="14" cy="14" r="2" fill="#eee"/></svg>
    <svg viewBox="0 0 18 18"><path d="M1 2h16v11h-5v4l-4-4H1z" fill="#fff"/><path d="M4 5h10M4 8h10M4 11h6" stroke="#430043"/></svg>
    <span class="lang">ENG</span><time>17:14</time>
  </div>
</div>

<div class="stamps"><span>智</span><span>行</span><span>者</span><span class="small">I C<br>社区</span></div>
</body>
</html>
```

FILE: styles.css
```css
:root {
  --face: #f4f2f7;
  --line: #808080;
  --ui: "Roboto Condensed", "Liberation Sans", sans-serif;
  --sys: "Noto Sans CJK SC", "Noto Sans", sans-serif;
}
* { box-sizing: border-box; }
body {
  margin: 0;
  height: 100vh;
  display: flex;
  flex-direction: column;
  background: var(--face);
  color: #222;
  font: 13px/16px var(--ui);
  overflow: hidden;
  position: relative;
}
h1, h2, h3, p { margin: 0; font: inherit; }
button, input, select { font: inherit; color: inherit; margin: 0; }
.defs { position: absolute; width: 0; height: 0; }

/* title bar */
.titlebar { flex: none; height: 22px; display: flex; align-items: center; padding-bottom: 1px; background: #fff; position: relative; font: 13px/20px var(--sys); color: #333; }
.app-icon { width: 18px; height: 18px; margin: 0 4px 0 1px; }
.window-buttons { margin-left: auto; display: flex; padding-right: 4px; }
.window-buttons button { width: 45px; height: 18px; padding: 0; border: 0; background: none; }
.window-buttons svg { width: 12px; height: 12px; fill: none; stroke: #333; }
.screen-blur { position: absolute; z-index: 2; left: 778px; top: 0; width: 517px; height: 25px; background: linear-gradient(100deg, #bfcad6 0, #c3d4dc 50%, #cccbd6 64%, #e4aab5 73%, #dcb0bc 85%, #e59aa6 100%); }
.record-mark { position: absolute; z-index: 3; left: 1041px; top: 26px; width: 7px; height: 2px; background: #c81e1e; }
.top-shade { position: absolute; left: 1495px; top: 0; width: 276px; height: 2px; background: #ccc; }

/* menu bar */
.menubar { flex: none; height: 23px; display: flex; align-items: center; gap: 1px; padding: 0 6px 2px 0; border-bottom: 3px solid #b41f22; font: 12px/18px var(--sys); color: #333; }
.menubar button { padding: 0 7px; border: 0; background: none; white-space: nowrap; }
.menubar u { text-underline-offset: 2px; }
.brand { margin-left: auto; font: bold 20px/18px "Open Sans", sans-serif; color: #333; }
.brand-a { position: relative; }
.brand-a::before { content: ""; position: absolute; left: 2px; top: 5px; width: 8px; height: 2px; background: #c8202c; }

/* toolbars */
.toolbars { flex: none; }
.toolrow { display: flex; height: 34px; padding-top: 1px; }
.toolrow + .toolrow { height: 35px; padding-top: 0; }
.tools { display: flex; align-items: center; padding: 0 8px 2px 5px; position: relative; background: linear-gradient(#ebeaed, #d8d7da 50%, #bfbec2); border-right: 1px dotted #e8e8ea; }
.tools::before { content: ""; position: absolute; left: 3px; top: 4px; bottom: 6px; width: 3px; background: repeating-linear-gradient(#3f97e0 0 3px, transparent 3px 5px); }
.after-gap { margin-left: 6px; }
.tools button { width: 31px; height: 28px; padding: 0; border: 0; background: none; display: flex; align-items: center; justify-content: center; }
.tools .wide { width: 28px; }
.tools .slim { width: 18px; }
.tools .blue { color: #3f72a8; }
.tools .pale { color: #b0b0b0; }
.tools svg { flex: none; width: 24px; height: 24px; }
.b { fill: url(#gb); stroke: #5068a8; }
.r { fill: none; stroke: #b8383a; stroke-width: 1.5; }
.w { fill: #fff; }
.w1 { fill: none; stroke: #eef1fa; stroke-width: 1.5; }
.gk { fill: none; stroke: #1c5f24; }
.gd { fill: none; stroke: #1c5f24; stroke-dasharray: 2 1; }
.t3d { font: bold 20px "Roboto Condensed", "Liberation Sans", sans-serif; fill: url(#gl); }
.t6 { font: bold 7px "Liberation Sans", sans-serif; fill: #222; }
.t7 { font: bold 7px "Liberation Sans", sans-serif; }
.t8 { font: bold 8px "Liberation Sans", sans-serif; }
.t7.w, .t8.w { fill: #fff; }
.t10 { font: bold 10px "Liberation Sans", sans-serif; fill: #444; }
.abc { font: 10px "Liberation Sans", sans-serif; fill: #666; }
.thelp { font: bold 14px "Liberation Sans", sans-serif; fill: #44588c; }

/* work area */
.workspace { flex: 1; min-height: 0; display: grid; grid-template-columns: 211px 1fr 242px; column-gap: 8px; padding-top: 1px; }
.panel { border-left: 1px solid #999; }
.panel-title { display: flex; align-items: center; gap: 8px; height: 17px; padding: 0 4px 4px 3px; border-top: 1px solid #aaa; border-right: 1px solid #888; background: linear-gradient(#e8e7ea, #bdbcc0); }
.panel-title span { margin-right: auto; padding-left: 4px; border-left: 3px dotted #3f97e0; line-height: 12px; }
.ti { width: 9px; height: 10px; }
.ti:last-child { margin-left: -4px; }

.btn { padding: 0; background: var(--face); border: 1px solid; border-color: #fff #707070 #707070 #fff; box-shadow: inset -1px -1px #b0b0b0; color: #222; white-space: nowrap; }
.btn.on { border-color: #777; box-shadow: inset -1px -1px #888, inset 1px 1px #fff; }
input[type="checkbox"] { appearance: none; flex: none; width: 12px; height: 12px; background: #fff; border: 2px solid; border-color: #808080 #ececec #ececec #808080; position: relative; display: block; }
input[type="checkbox"]:disabled { background: var(--face); }
input[type="checkbox"]:checked::after { content: ""; position: absolute; left: 2px; top: -1px; width: 4px; height: 7px; border: solid #000; border-width: 0 2px 2px 0; transform: rotate(40deg); }
.combo { position: relative; display: block; }
.combo select { display: block; appearance: none; width: 100%; height: 19px; padding: 0 16px 0 2px; border: 2px solid; border-color: #777 #999 #999 #777; border-radius: 0; background: #fff; line-height: 15px; }
.combo::before { content: ""; position: absolute; right: 2px; top: 2px; width: 15px; height: 15px; background: var(--face); border: 1px solid; border-color: #fff #707070 #707070 #fff; pointer-events: none; }
.combo::after { content: ""; position: absolute; right: 6px; top: 8px; border: solid transparent; border-width: 4px 4px 0; border-top-color: #000; pointer-events: none; }

.find-body { padding: 6px 14px 0 8px; }
.group { margin: 0; padding: 0 4px 0 6px; border: 1px solid #aaa; min-width: 0; }
.group legend { padding: 0 2px; margin-left: 0; }
.filter-buttons { display: flex; gap: 11px; margin-top: 2px; }
.filter-buttons .btn { width: 45px; height: 17px; line-height: 14px; }
.filter-buttons .on { width: 50px; }
.checks { display: grid; grid-template-columns: 84px 1fr; grid-auto-rows: 22px; padding: 1px 0; }
.checks label { display: flex; align-items: center; gap: 6px; white-space: nowrap; }
.off { color: #aaa; }
.by-name { margin-top: 6px; padding-bottom: 6px; }
.name-grid { display: grid; grid-template-columns: 120px 50px; gap: 5px 6px; }
.prompt { display: flex; align-items: center; gap: 8px; }
.prompt input { flex: 1; min-width: 0; height: 19px; background: #fff; border: 2px solid; border-color: #808080 #e2e2e2 #e2e2e2 #808080; padding: 0 2px; }
.more { height: 21px; }
.query { width: 92px; height: 22px; margin-top: 16px; }

.center { display: flex; flex-direction: column; min-width: 0; gap: 7px; padding-bottom: 1px; }
.canvas { flex: 1; min-height: 0; border-top: 2px solid #8a8a8a; background: #000; }
.canvas svg { display: block; width: 100%; height: 100%; }
.refdes { font: 100 124px "Roboto Condensed", Lato, sans-serif; fill: #22667a; }

.bottom { flex: none; height: 109px; display: grid; grid-template: 109px / 722px 1fr; gap: 7px; }
.command, .world { display: flex; border: 1px solid #999; min-width: 0; min-height: 0; }
.side-title { flex: none; width: 15px; min-height: 0; display: flex; flex-direction: column; align-items: center; gap: 5px; padding: 4px 0 2px; background: linear-gradient(90deg, #e8e7ea, #bdbcc0); }
.side-title svg { flex: none; width: 8px; height: 8px; }
.side-title h2 { writing-mode: vertical-rl; transform: rotate(180deg); margin-top: auto; padding-top: 3px; border-top: 3px dotted #3f97e0; font: 11px/10px var(--ui); white-space: nowrap; }
.log { flex: 1; margin-bottom: 5px; padding: 1px; background: #fff; border: solid #888; border-width: 0 1px 2px 1px; line-height: 13px; overflow: hidden; white-space: nowrap; }
.scroll { flex: none; width: 16px; margin-bottom: 5px; display: flex; flex-direction: column; background: #faf9fb; }
.scroll .btn { height: 16px; display: flex; align-items: center; justify-content: center; }
.scroll svg { width: 7px; height: 7px; }
.thumb { height: 7px; margin-top: auto; border-right: 1px solid #777; border-bottom: 1px solid #777; border-top: 1px solid #ddd; }
.world { border-bottom: 2px solid #888; border-right: 2px solid #888; }
.map { flex: 1; min-height: 0; margin: 2px 1px 1px 3px; background: #000; }
.map svg { display: block; width: 100%; height: 100%; }

.right { display: flex; flex-direction: column; gap: 6px; min-width: 0; padding-right: 2px; }
.right > .panel { flex: 1 1 0; min-height: 0; position: relative; display: flex; flex-direction: column; }
.right > .options { flex-basis: 2px; }
.right .panel-title { flex: none; margin-right: -1px; }
.views { display: flex; align-items: center; padding: 14px 0 2px 0; }
.views label { width: 43px; }
.views .combo { width: 155px; }
.layers { border-collapse: collapse; table-layout: fixed; width: 198px; flex: none; }
.layers col { width: 21px; }
.layers .c-name { width: 44px; }
.layers .c-gap { width: 28px; }
.layers tr { height: 22px; }
.layers td, .layers th { padding: 0; font-weight: normal; text-align: left; white-space: nowrap; vertical-align: middle; }
.layers th { padding-right: 1px; text-decoration: underline; text-underline-offset: 2px; text-align: right; }
.layers th:first-child { text-align: left; }
.layers th:last-child { padding-right: 4px; }
.layers .plan { padding-right: 10px; }
.layers td input, .layers td .sw { margin-left: 5px; }
.sw { display: block; width: 12px; height: 12px; padding: 0; background: #000; border: 2px solid #8c8c8c; }
.sw.red { background: #a00000; }
.sw.blue { background: #0000e0; }
.sw.yellow { background: #ffff00; }
.layer-list { flex: 1; min-height: 0; margin: 2px 0 0 1px; padding-top: 2px; border: 1px solid #888; border-bottom: 0; }

.meter { position: absolute; right: 0; top: -38px; width: 10px; height: 60px; border: 3px solid #555; border-radius: 5px; background: linear-gradient(#555 40%, #e09a40 40%, #b0b040 60%, #30c840); }
.options-body { padding: 12px 0 0 8px; display: flex; flex-direction: column; }
.options-body > label { display: flex; align-items: center; gap: 6px; height: 22px; }
.options-body h3 { margin-top: 14px; line-height: 20px; }
.fields { display: grid; grid-template-columns: 38px 1fr; grid-auto-rows: 22px; column-gap: 25px; align-items: center; justify-items: start; }
.fields label { justify-self: end; }
.w-type { width: 92px; }
.w-angle { width: 80px; }
.w-point { width: 106px; }

/* status bar */
.status { flex: none; height: 18px; margin-top: 3px; display: flex; line-height: 15px; text-align: center; }
.status > span { flex: none; border: solid #888; border-width: 2px 0 0 2px; margin-right: 1px; height: 18px; }
.status > .s-msg { flex: 1; text-align: left; padding-left: 1px; }
.s-led { width: 52px; background: #00ff00; }
.s-free { width: 131px; }
.s-layer { width: 122px; }
.s-xy { width: 132px; }
.s-pa { width: 36px; display: flex; gap: 3px; }
.s-pa .btn { width: 15px; line-height: 12px; }
.s-null { width: 101px; }
.s-blank { width: 42px; }
.status > .s-mode { width: 294px; text-align: left; padding-left: 24px; }

/* task bar */
.taskbar { flex: none; height: 29px; display: flex; align-items: center; padding: 0 4px 0 0; background: #430043; color: #f1e6f1; font: 13px/20px var(--sys); }
.taskbar svg { flex: none; width: 18px; height: 18px; }
.tk { width: 37px; height: 29px; padding: 0; border: 0; background: none; display: flex; align-items: center; justify-content: center; }
.task { height: 29px; width: 154px; margin-left: 4px; padding: 0 4px; border: 0; border-bottom: 2px solid #f0b8f0; background: none; display: flex; align-items: center; gap: 3px; white-space: nowrap; font-size: 12px; }
.task.active { width: 156px; padding: 0 7px; background: #861a8c; border-bottom-color: #f080f0; }
.tray { margin-left: auto; display: flex; align-items: center; gap: 6px; padding-right: 11px; border-right: 1px solid #806080; }
.tray .far { margin-left: 24px; }
.tray time { padding-left: 10px; }

/* channel stamps lying over the lower right corner */
.stamps { position: absolute; right: 5px; bottom: 28px; display: flex; gap: 6px; }
.stamps span { width: 43px; height: 43px; background: #dc1414; border: 1px solid #dc1414; border-radius: 4px; box-shadow: inset 0 0 0 1px #fff, 0 0 0 1px #fff; color: #fff; font: italic 900 34px/39px "Noto Sans CJK SC", sans-serif; text-align: center; }
.stamps .small { font: 15px/20px "Noto Sans CJK SC", sans-serif; }
```
